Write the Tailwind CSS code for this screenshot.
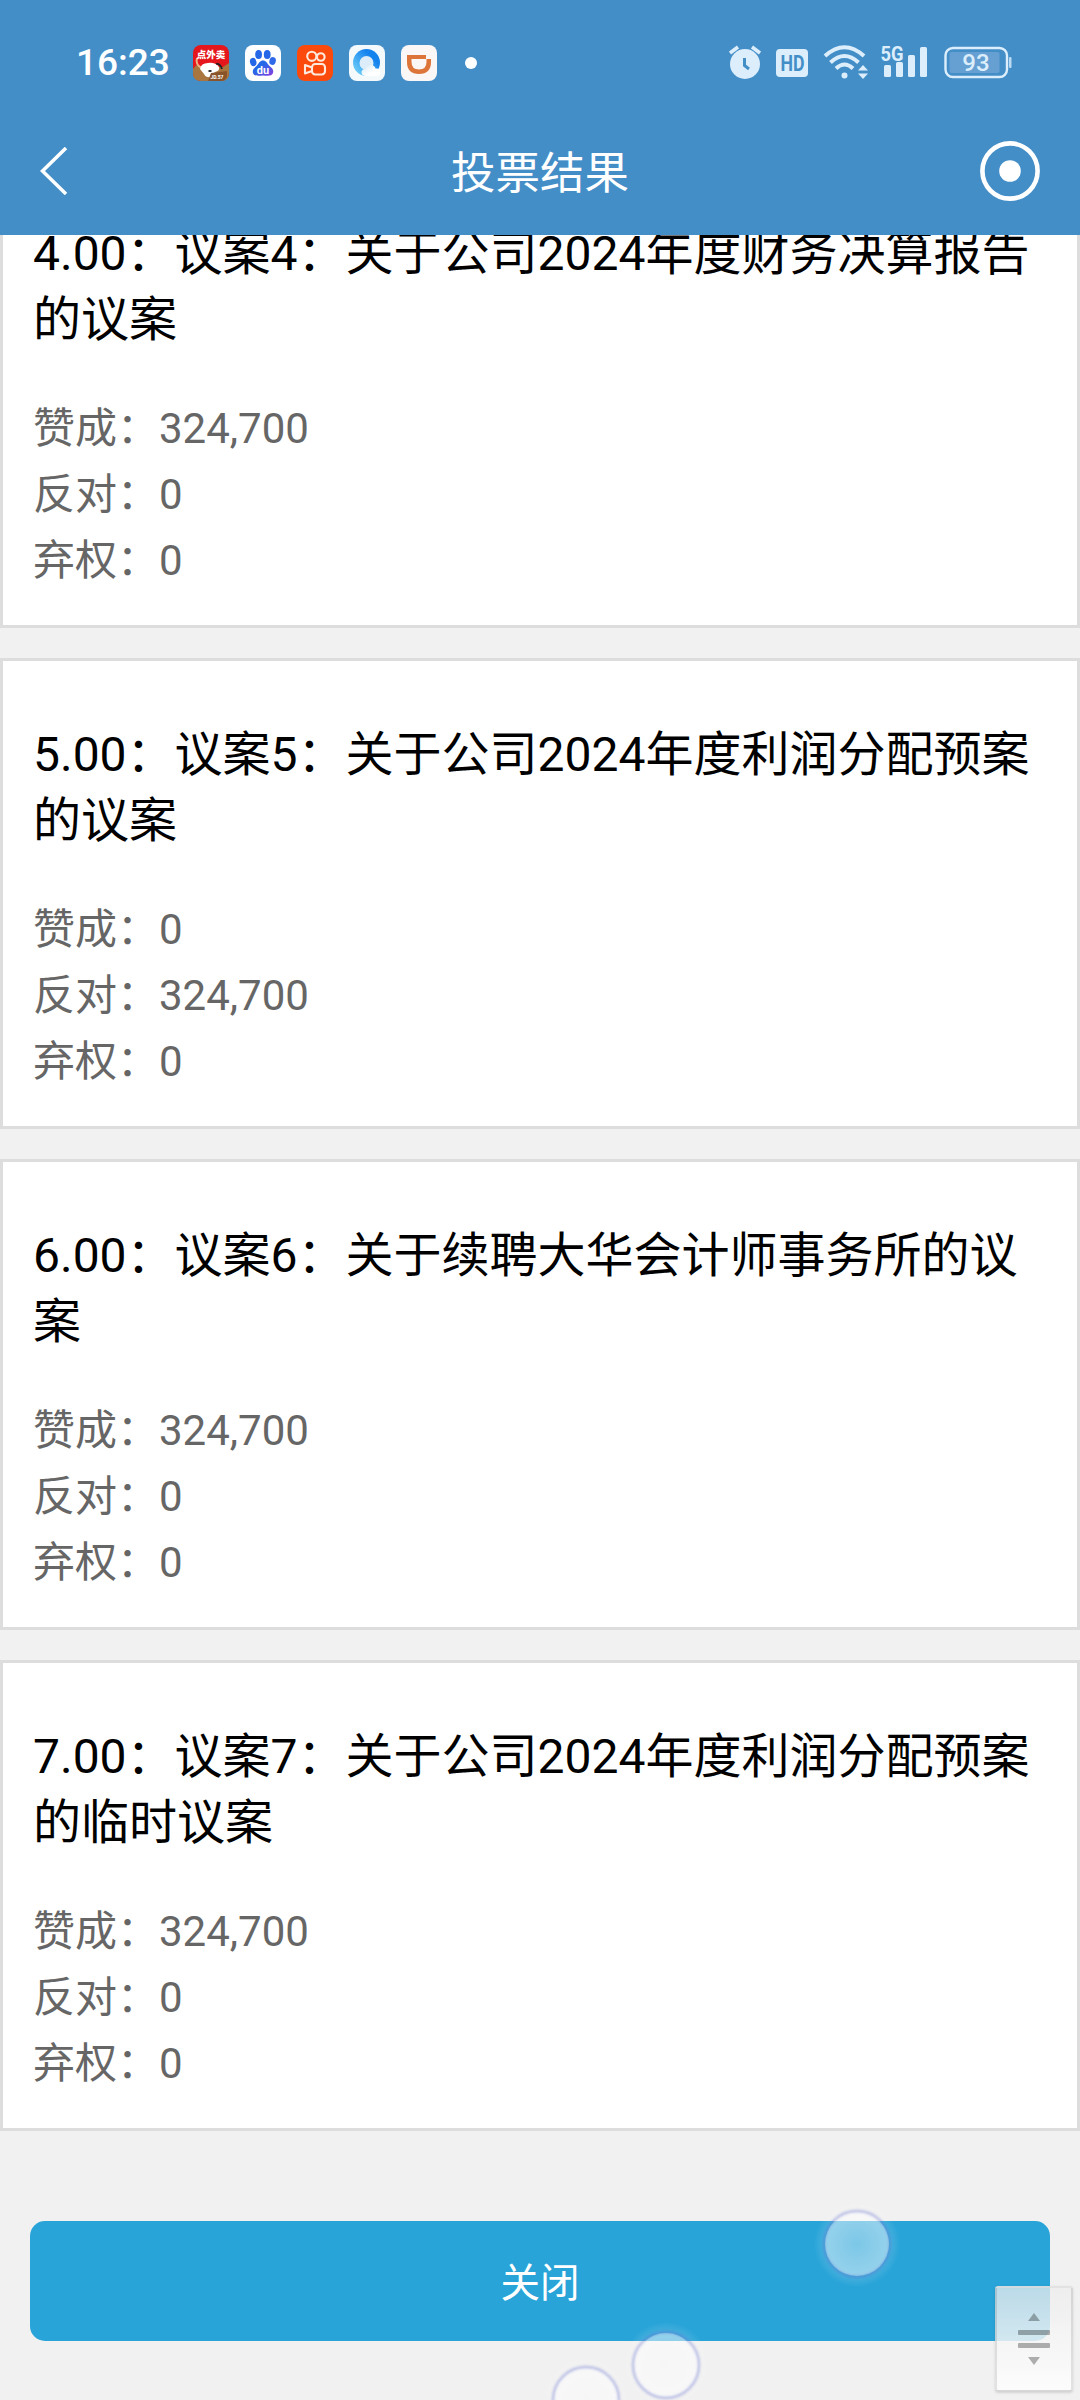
<!DOCTYPE html>
<html lang="zh-CN">

<head>
    <meta charset="UTF-8">
    <meta name="viewport" content="width=device-width, initial-scale=1.0">
    <title>投票结果</title>
    <script src="https://cdn.jsdelivr.net/npm/@tailwindcss/browser@4"></script>
</head>

<body class="relative w-[1080px] h-[2400px] overflow-hidden bg-[#f1f1f1] font-['Roboto','Noto_Sans_CJK_SC',sans-serif]">
    <header class="relative z-10 h-[235px] bg-[#448ec8] text-white">
        <!-- status bar -->
        <div class="flex items-center justify-between h-[107px] pt-[19px] pl-[76px] pr-[67px]">
            <div class="flex items-center gap-4">
                <span class="w-[101px] text-[37px] leading-9 font-medium">16:23</span>
                <svg class="size-9" viewBox="0 0 36 36">
                    <rect width="36" height="36" rx="8" fill="#e5171d" />
                    <path d="M0 24Q5 16 9 23L30 22L36 18V28Q36 36 28 36H8Q0 36 0 28Z" fill="#a8763e" />
                    <path d="M4 13Q2 20 9 23" stroke="#f0b080" stroke-width="2" fill="none" />
                    <path d="M7 24Q8 18 15 18Q22 17 26 22Q27 26 22 27L18 32Q13 33 11 29Z" fill="#fff" />
                    <path d="M23 19Q27 18 29 24" stroke="#222" stroke-width="1.800" fill="none" />
                    <ellipse cx="17" cy="26" rx="1.800" ry="1" fill="#222" />
                    <path d="M18 28L34 26V32Q32 36 28 36H15Z" fill="#8a542a" />
                    <text x="18" y="13" text-anchor="middle" font-size="9.500" font-weight="900" fill="#fff" font-family="Noto Sans CJK SC">点外卖</text>
                    <text x="24" y="34" text-anchor="middle" font-size="5" font-weight="700" fill="#fff">JD.57</text>
                </svg>
                <svg class="size-9" viewBox="0 0 36 36">
                    <defs>
                        <linearGradient id="paw" x1="0" y1="0" x2="1" y2="1">
                            <stop offset="0.4" stop-color="#2468e8" />
                            <stop offset="1" stop-color="#8a3ce0" />
                        </linearGradient>
                    </defs>
                    <rect width="36" height="36" rx="8" fill="#fff" />
                    <ellipse cx="13.6" cy="9.5" rx="3.4" ry="4.5" fill="#2468e8" />
                    <ellipse cx="22.2" cy="9.5" rx="3.4" ry="4.5" fill="#2468e8" />
                    <ellipse cx="8.2" cy="17" rx="3.2" ry="4.2" fill="#2468e8" transform="rotate(-15 8.2 17)" />
                    <ellipse cx="27.6" cy="16" rx="3.2" ry="4" fill="#2f68e8" transform="rotate(15 27.6 16)" />
                    <path d="M18 15.500C21 15.500 22 18 24 20.500C27 23 29 24.500 28 28C27 31 24 31 18 30.500C12 31 9 31 8 28C7 24.500 9.500 23 12 20.500C14 18 15 15.500 18 15.500Z" fill="url(#paw)" />
                    <text x="18" y="28.500" text-anchor="middle" font-size="11" font-weight="700" fill="#fff">du</text>
                </svg>
                <svg class="size-9" viewBox="0 0 36 36" fill="none" stroke="#ffe9dc" stroke-width="2.100" stroke-linejoin="round">
                    <rect width="36" height="36" rx="8" fill="#fb4a0c" stroke="none" />
                    <circle cx="14.800" cy="11.300" r="4.600" />
                    <circle cx="23.800" cy="12" r="3.800" />
                    <rect x="15" y="19" width="13" height="10.500" rx="3.200" />
                    <path d="M15 22.500L8 20V28.500L15 26" />
                </svg>
                <svg class="size-9" viewBox="0 0 36 36">
                    <defs>
                        <linearGradient id="ring" x1="0" y1="1" x2="1" y2="0">
                            <stop offset="0.1" stop-color="#6fd0f8" />
                            <stop offset="0.7" stop-color="#1583ee" />
                        </linearGradient>
                        <linearGradient id="cloud" x1="0" y1="0" x2="1" y2="1">
                            <stop offset="0" stop-color="#d5e8f6" />
                            <stop offset="0.6" stop-color="#fff" />
                        </linearGradient>
                    </defs>
                    <rect width="36" height="36" rx="8" fill="#f4f9fc" />
                    <circle cx="17.500" cy="17.500" r="13.500" fill="url(#ring)" />
                    <circle cx="17.500" cy="18" r="7" fill="#dcecf8" />
                    <path d="M17 31Q12.500 31 12.500 27Q13 23.500 17 24Q18.500 19.500 22.500 20Q26 20.500 26.500 23.500Q32 23 31.500 28Q31 31 27 31Z" fill="url(#cloud)" />
                </svg>
                <svg class="size-9" viewBox="0 0 36 36">
                    <rect width="36" height="36" rx="8" fill="#faf7f6" />
                    <path d="M6 10H25V14H10.500V17Q10.500 24.500 18 24.500Q25.500 24.500 25.500 17V14H30V17Q30 29 18 29Q6 29 6 17Z" fill="#dd7439" />
                </svg>
                <span class="size-3 ml-[12px] rounded-full bg-white"></span>
            </div>

            <div class="flex items-center">
                <svg class="w-8 h-9" viewBox="0 0 32 36" fill="#dceefb">
                    <circle cx="16" cy="19" r="15" />
                    <path d="M1 8L9 2M31 8L23 2" stroke="#dceefb" stroke-width="3.600" />
                    <path d="M15.500 13V20.500L20 24" fill="none" stroke="#448ec8" stroke-width="3" />
                </svg>
                <svg class="w-8 h-9 ml-[15px] overflow-visible" viewBox="0 -4 32 36">
                    <rect width="32" height="28" rx="4" fill="#dceefb" />
                    <text x="4.500" y="22" font-size="22.500" font-weight="700" textLength="24" lengthAdjust="spacingAndGlyphs" fill="#448ec8">HD</text>
                </svg>
                <svg class="w-[46px] h-9 ml-[15px]" viewBox="0 0 46 36" fill="none" stroke="#dceefb" stroke-width="4">
                    <path d="M2 11Q21.500 -6.500 41 11M7.500 17.500Q21.500 4.500 35.500 17.500M13 23.500Q21.500 15.500 30 23.500" />
                    <circle cx="21.500" cy="30.500" r="3" fill="#dceefb" stroke="none" />
                    <path d="M35 25.500L40 20L45 25.500ZM35 28.500L40 34L45 28.500Z" fill="#dceefb" stroke="none" />
                </svg>
                <svg class="w-12 h-9 ml-[11px] overflow-visible" viewBox="0 0 48 36" fill="#dceefb">
                    <text x="0.500" y="15.500" font-size="20" font-weight="700" textLength="23" lengthAdjust="spacingAndGlyphs">5G</text>
                    <rect x="4" y="20" width="7" height="12" rx="1.500" />
                    <rect x="16" y="17" width="7" height="15" rx="1.500" />
                    <rect x="28" y="10" width="7" height="22" rx="1.500" />
                    <rect x="40" y="2" width="7" height="30" rx="1.500" />
                </svg>
                <svg class="w-[68px] h-9 ml-[16px] mr-px" viewBox="0 0 68 36">
                    <rect x="1.500" y="3" width="61.500" height="29" rx="7.500" fill="none" stroke="#dceefb" stroke-width="2.400" />
                    <rect x="5.500" y="7" width="50" height="21" rx="2" fill="#669fd2" />
                    <rect x="65" y="12" width="2.500" height="11" rx="1" fill="#b9daf2" />
                    <text x="32" y="26" text-anchor="middle" font-size="24" font-weight="500" fill="#dceefb">93</text>
                </svg>
            </div>
        </div>

        <!-- title bar -->
        <div class="flex items-center justify-between h-32 px-10">
            <svg class="w-[60px] h-[48px]" viewBox="0 0 60 48" fill="none" stroke="#fff" stroke-width="3.500">
                <path d="M26 1L2.500 24L26 47" />
            </svg>
            <h1 class="pt-[5px] text-[44.500px] leading-[60px]">投票结果</h1>
            <svg class="size-[60px]" viewBox="0 0 60 60">
                <circle cx="30" cy="30" r="27.600" fill="none" stroke="#fff" stroke-width="4.600" />
                <circle cx="30" cy="30" r="10.800" fill="#fff" />
            </svg>
        </div>
    </header>

    <!-- scrolled list, the first card slides under the header -->
    <main class="flex flex-col gap-[30px] -mt-[78px] text-[42px] leading-[66px] text-[#666]">
        <section class="h-[471px] px-[30px] pt-[61px] border-3 border-[#ddd] bg-white">
            <h2 class="mb-[43px] text-5xl leading-[66px] text-black">4.00：议案4：关于公司2024年度财务决算报告的议案</h2>
            <p>赞成：324,700</p>
            <p>反对：0</p>
            <p>弃权：0</p>
        </section>
        <section class="h-[471px] px-[30px] pt-[61px] border-3 border-[#ddd] bg-white">
            <h2 class="mb-[43px] text-5xl leading-[66px] text-black">5.00：议案5：关于公司2024年度利润分配预案的议案</h2>
            <p>赞成：0</p>
            <p>反对：324,700</p>
            <p>弃权：0</p>
        </section>
        <section class="h-[471px] px-[30px] pt-[61px] border-3 border-[#ddd] bg-white">
            <h2 class="mb-[43px] text-5xl leading-[66px] text-black">6.00：议案6：关于续聘大华会计师事务所的议案</h2>
            <p>赞成：324,700</p>
            <p>反对：0</p>
            <p>弃权：0</p>
        </section>
        <section class="h-[471px] px-[30px] pt-[61px] border-3 border-[#ddd] bg-white">
            <h2 class="mb-[43px] text-5xl leading-[66px] text-black">7.00：议案7：关于公司2024年度利润分配预案的临时议案</h2>
            <p>赞成：324,700</p>
            <p>反对：0</p>
            <p>弃权：0</p>
        </section>
    </main>

    <div class="px-[30px] pt-[90px]">
        <button class="block w-full h-[120px] pt-[5px] rounded-[15px] bg-[#29a4d8] text-[39.500px] leading-[60px] text-white">关闭</button>
    </div>

    <!-- touch bubbles -->
    <svg class="absolute left-[520px] top-[2180px] w-[400px] h-[220px]" viewBox="520 2180 400 220">
        <defs>
            <radialGradient id="glow">
                <stop offset="0.740" stop-color="#fff" stop-opacity="0.150" />
                <stop offset="1" stop-color="#fff" stop-opacity="0" />
            </radialGradient>
            <radialGradient id="bubble">
                <stop offset="0" stop-color="#fff" stop-opacity="0.280" />
                <stop offset="1" stop-color="#fff" stop-opacity="0.420" />
            </radialGradient>
            <filter id="soft">
                <feGaussianBlur stdDeviation="0.800" />
            </filter>
        </defs>
        <g fill="url(#glow)">
            <circle cx="857" cy="2244" r="43" />
            <circle cx="666" cy="2365" r="43" />
            <circle cx="586" cy="2400" r="43" />
        </g>
        <g fill="url(#bubble)">
            <circle cx="857" cy="2244" r="32" />
            <circle cx="666" cy="2365" r="32" />
            <circle cx="586" cy="2400" r="32" />
        </g>
        <g fill="none" stroke="#5a68cc" stroke-opacity="0.320" stroke-width="2.800" filter="url(#soft)">
            <circle cx="857" cy="2244" r="33" />
            <circle cx="666" cy="2365" r="33" />
            <circle cx="586" cy="2400" r="33" />
        </g>
    </svg>

    <!-- scroll handle -->
    <div class="absolute left-[995px] top-[2286px] flex items-center justify-center w-[78px] h-[106px] rounded-[3px] border-2 border-black/10 bg-linear-to-b from-[#ececec]/75 to-[#fdfdfd]/90 shadow-sm">
        <svg class="w-8 h-[52px]" viewBox="0 0 32 52" fill="#000" fill-opacity="0.300">
            <path d="M10 8L16 0L22 8ZM10 44L16 52L22 44Z" />
            <rect y="17" width="32" height="5" rx="1" />
            <rect y="30" width="32" height="5" rx="1" />
        </svg>
    </div>
</body>

</html>
